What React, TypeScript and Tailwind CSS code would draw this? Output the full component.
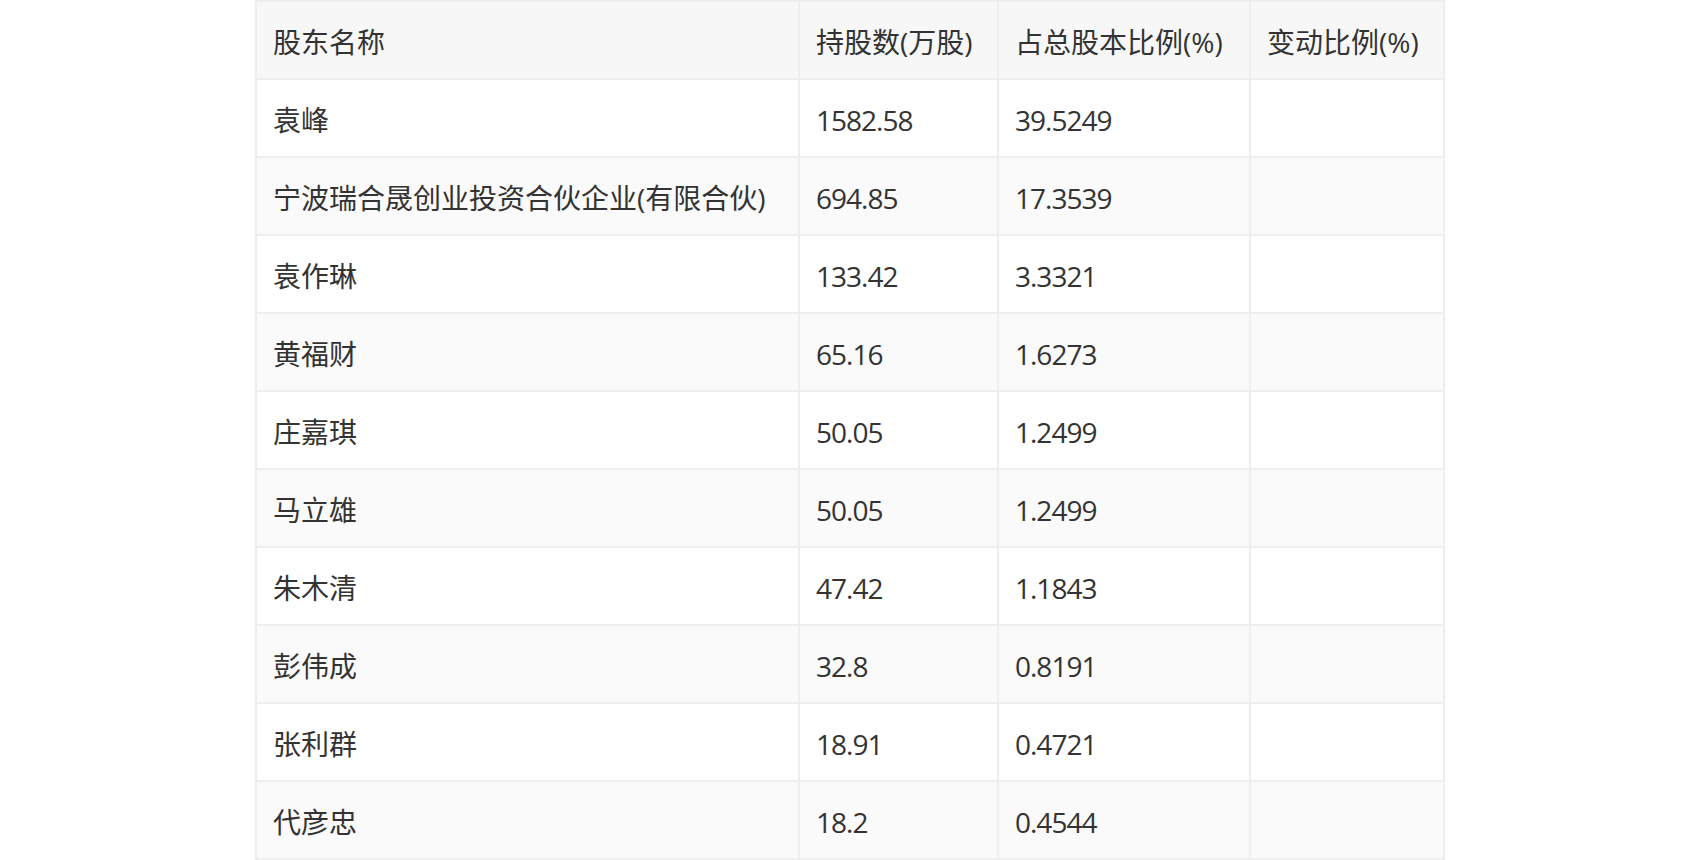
import React from 'react';

interface Holder {
  name: string;
  shares: string;
  ratio: string;
  change: string;
}

const HEADERS = ['股东名称', '持股数(万股)', '占总股本比例(%)', '变动比例(%)'];

const HOLDERS: Holder[] = [
  { name: '袁峰', shares: '1582.58', ratio: '39.5249', change: '' },
  { name: '宁波瑞合晟创业投资合伙企业(有限合伙)', shares: '694.85', ratio: '17.3539', change: '' },
  { name: '袁作琳', shares: '133.42', ratio: '3.3321', change: '' },
  { name: '黄福财', shares: '65.16', ratio: '1.6273', change: '' },
  { name: '庄嘉琪', shares: '50.05', ratio: '1.2499', change: '' },
  { name: '马立雄', shares: '50.05', ratio: '1.2499', change: '' },
  { name: '朱木清', shares: '47.42', ratio: '1.1843', change: '' },
  { name: '彭伟成', shares: '32.8', ratio: '0.8191', change: '' },
  { name: '张利群', shares: '18.91', ratio: '0.4721', change: '' },
  { name: '代彦忠', shares: '18.2', ratio: '0.4544', change: '' },
];

const cell = 'border-2 border-[#eeeeee] pl-[16px] pr-2 pt-[5px] text-left align-middle font-normal';
const num = 'tracking-[-1px]';

export default function App() {
  return (
    <div className="w-full min-h-[860px] bg-white flex justify-center font-['Open_Sans','Noto_Sans_CJK_SC',sans-serif] text-[28px] leading-[1.4] text-[#333333]">
      <table className="w-[1188px] h-fit border-collapse table-fixed">
        <colgroup>
          <col className="w-[543px]" />
          <col className="w-[199px]" />
          <col className="w-[252px]" />
          <col className="w-[194px]" />
        </colgroup>
        <thead>
          <tr className="h-[78px] bg-[#f7f7f7]">
            {HEADERS.map((h) => (
              <th key={h} className={cell}>
                {h}
              </th>
            ))}
          </tr>
        </thead>
        <tbody>
          {HOLDERS.map((row, i) => (
            <tr key={row.name} className={`h-[78px] ${i % 2 === 1 ? 'bg-[#fafafa]' : 'bg-white'}`}>
              <td className={cell}>{row.name}</td>
              <td className={`${cell} ${num}`}>{row.shares}</td>
              <td className={`${cell} ${num}`}>{row.ratio}</td>
              <td className={`${cell} ${num}`}>{row.change}</td>
            </tr>
          ))}
        </tbody>
      </table>
    </div>
  );
}
